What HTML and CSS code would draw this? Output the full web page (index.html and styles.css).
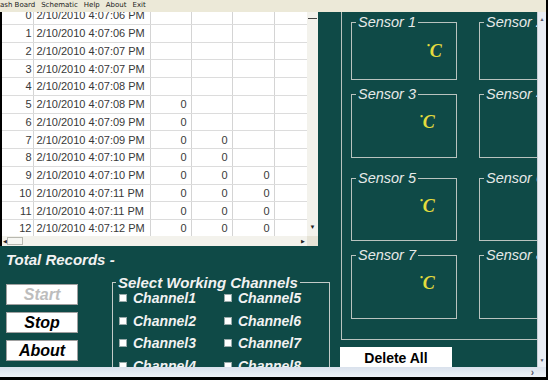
FILE: index.html
```html
<!DOCTYPE html>
<html lang="en">
  <head>
    <meta charset="UTF-8" />
    <meta name="viewport" content="width=device-width, initial-scale=1.0" />
    <title>Temperature Logger</title>
    <link rel="stylesheet" href="styles.css">
  </head>
  <body>
    <div class="window">
      <!-- Menu -->
      <div class="menubar">
        <span>ash Board</span>
        <span>Schematic</span>
        <span>Help</span>
        <span>About</span>
        <span>Exit</span>
      </div>

      <div class="main">
        <div class="left">
          <!-- Siatka z rekordami -->
          <div class="grid">
            <div class="grid-view">
              <div class="table-wrap">
                <table class="records">
                  <colgroup>
                    <col style="width: 31px" />
                    <col style="width: 117px" />
                    <col style="width: 41px" />
                    <col style="width: 41px" />
                    <col style="width: 42px" />
                    <col style="width: 33px" />
                  </colgroup>
                  <tbody>
                    <tr><td>0</td><td class="date">2/10/2010 4:07:06 PM</td><td></td><td></td><td></td><td></td></tr>
                    <tr><td>1</td><td class="date">2/10/2010 4:07:06 PM</td><td></td><td></td><td></td><td></td></tr>
                    <tr><td>2</td><td class="date">2/10/2010 4:07:07 PM</td><td></td><td></td><td></td><td></td></tr>
                    <tr><td>3</td><td class="date">2/10/2010 4:07:07 PM</td><td></td><td></td><td></td><td></td></tr>
                    <tr><td>4</td><td class="date">2/10/2010 4:07:08 PM</td><td></td><td></td><td></td><td></td></tr>
                    <tr><td>5</td><td class="date">2/10/2010 4:07:08 PM</td><td>0</td><td></td><td></td><td></td></tr>
                    <tr><td>6</td><td class="date">2/10/2010 4:07:09 PM</td><td>0</td><td></td><td></td><td></td></tr>
                    <tr><td>7</td><td class="date">2/10/2010 4:07:09 PM</td><td>0</td><td>0</td><td></td><td></td></tr>
                    <tr><td>8</td><td class="date">2/10/2010 4:07:10 PM</td><td>0</td><td>0</td><td></td><td></td></tr>
                    <tr><td>9</td><td class="date">2/10/2010 4:07:10 PM</td><td>0</td><td>0</td><td>0</td><td></td></tr>
                    <tr><td>10</td><td class="date">2/10/2010 4:07:11 PM</td><td>0</td><td>0</td><td>0</td><td></td></tr>
                    <tr><td>11</td><td class="date">2/10/2010 4:07:11 PM</td><td>0</td><td>0</td><td>0</td><td></td></tr>
                    <tr><td>12</td><td class="date">2/10/2010 4:07:12 PM</td><td>0</td><td>0</td><td>0</td><td></td></tr>
                  </tbody>
                </table>
              </div>
              <div class="vscroll">
                <span class="cap"></span>
                <span class="arrow">▼</span>
              </div>
            </div>
            <div class="hscroll">
              <span class="arrow">◀</span>
              <span class="thumb"></span>
              <span class="track"></span>
              <span class="arrow">▶</span>
              <span class="corner"></span>
            </div>
          </div>

          <!-- Sterowanie -->
          <div class="controls">
            <div class="total">Total Records -</div>
            <div class="control-row">
              <div class="buttons">
                <button class="btn" disabled>Start</button>
                <button class="btn">Stop</button>
                <button class="btn">About</button>
              </div>
              <fieldset class="channels">
                <legend>Select Working Channels</legend>
                <div class="channel-list">
                  <label><span class="box"></span>Channel1</label>
                  <label><span class="box"></span>Channel2</label>
                  <label><span class="box"></span>Channel3</label>
                  <label><span class="box"></span>Channel4</label>
                  <label><span class="box"></span>Channel5</label>
                  <label><span class="box"></span>Channel6</label>
                  <label><span class="box"></span>Channel7</label>
                  <label><span class="box"></span>Channel8</label>
                </div>
              </fieldset>
            </div>
          </div>
        </div>

        <!-- Czujniki -->
        <div class="right">
          <div class="sensor-group">
            <div class="sensor-row">
              <fieldset class="sensor"><legend>Sensor 1</legend><span class="unit first"><span class="deg">•</span>C</span></fieldset>
              <fieldset class="sensor"><legend>Sensor 2</legend></fieldset>
            </div>
            <div class="sensor-row">
              <fieldset class="sensor"><legend>Sensor 3</legend><span class="unit"><span class="deg">•</span>C</span></fieldset>
              <fieldset class="sensor"><legend>Sensor 4</legend></fieldset>
            </div>
            <div class="sensor-row">
              <fieldset class="sensor"><legend>Sensor 5</legend><span class="unit"><span class="deg">•</span>C</span></fieldset>
              <fieldset class="sensor"><legend>Sensor 6</legend></fieldset>
            </div>
            <div class="sensor-row">
              <fieldset class="sensor"><legend>Sensor 7</legend><span class="unit"><span class="deg">•</span>C</span></fieldset>
              <fieldset class="sensor"><legend>Sensor 8</legend></fieldset>
            </div>
          </div>
          <button class="delete">Delete All</button>
        </div>

        <div class="win-vscroll">
          <span class="arrow">▲</span>
          <span class="arrow">▼</span>
        </div>
      </div>

      <div class="win-hscroll">
        <span class="arrow">›</span>
      </div>
    </div>
  </body>
</html>
```

FILE: styles.css
```css
body {
  margin: 0;
  background: #000;
  font-family: "Liberation Sans", Arial, sans-serif;
}

.window {
  width: 546px;
  height: 377px;
  display: flex;
  flex-direction: column;
  background: #0f4a47;
  overflow: hidden;
}

.menubar {
  height: 12px;
  flex-shrink: 0;
  display: flex;
  gap: 6px;
  background: #ece9d8;
  font-family: "DejaVu Sans", sans-serif;
  font-size: 7px;
  line-height: 11px;
  color: #1a1a1a;
}

.main {
  height: 355px;
  display: flex;
}

.left {
  width: 318px;
  flex-shrink: 0;
  display: flex;
  flex-direction: column;
}

/* siatka */
.grid {
  height: 234px;
  border-left: 2px solid #000;
  display: flex;
  flex-direction: column;
}

.grid-view {
  height: 224px;
  display: flex;
}

.table-wrap {
  width: 305px;
  background: #fff;
  overflow: hidden;
}

.records {
  width: 305px;
  table-layout: fixed;
  border-collapse: collapse;
  margin-top: -5px;
  font-size: 11px;
  color: #383838;
}

.records td {
  height: 16.75px;
  padding: 0 4px 0 0;
  text-align: right;
  white-space: nowrap;
  overflow: hidden;
  border-right: 1px solid #d4d4d4;
  border-bottom: 1px solid #dcdcdc;
}

.records td:first-child {
  padding-right: 1px;
}

.records td.date {
  text-align: left;
  padding-left: 3px;
}

.vscroll {
  width: 11px;
  display: flex;
  flex-direction: column;
  justify-content: space-between;
  align-items: center;
  background: #f3f2ec;
  font-size: 6px;
  color: #222;
}

.vscroll .cap {
  width: 9px;
  margin-top: 6px;
  border-bottom: 1px solid #444;
}

.vscroll .arrow {
  margin-bottom: 6px;
}

.hscroll {
  height: 10px;
  display: flex;
  align-items: center;
  background: #f3f2ec;
  font-size: 5px;
  color: #222;
}

.hscroll .arrow {
  width: 5px;
  text-align: center;
}

.hscroll .thumb {
  width: 16px;
  height: 8px;
  border: 1px solid #b8b8b0;
  box-sizing: border-box;
  background: #f6f6f2;
}

.hscroll .track {
  flex: 1;
}

.hscroll .corner {
  width: 11px;
  height: 10px;
  margin-left: 2px;
  background: #e6e3d6;
}

/* sterowanie */
.controls {
  flex: 1;
  padding: 5px 0 0 6px;
  color: #f2f2f2;
}

.total {
  font-size: 15px;
  font-weight: bold;
  font-style: italic;
  line-height: 18px;
}

.control-row {
  display: flex;
  margin-top: 6px;
}

.buttons {
  width: 72px;
  flex-shrink: 0;
  margin-top: 9px;
  display: flex;
  flex-direction: column;
  gap: 7px;
}

.btn {
  height: 21px;
  padding: 0;
  background: #fff;
  border: 1px solid #a0a0a0;
  font-family: "Liberation Sans", Arial, sans-serif;
  font-size: 16px;
  font-weight: bold;
  font-style: italic;
  color: #000;
}

.btn:disabled {
  color: #bdbdbd;
}

.channels {
  width: 211px;
  flex-shrink: 0;
  margin: 0 0 0 34px;
  padding: 0 0 0 6px;
  box-sizing: border-box;
  border: 1px solid #c3cbc8;
  border-bottom: none;
}

.channels legend {
  margin-left: -3px;
  padding: 0 2px;
  font-size: 15px;
  font-weight: bold;
  font-style: italic;
  line-height: 15px;
}

.channel-list {
  margin-top: -3px;
  display: grid;
  grid-template-columns: 105px 105px;
  grid-template-rows: repeat(4, 22.5px);
  grid-auto-flow: column;
}

.channel-list label {
  display: flex;
  align-items: center;
  gap: 6px;
  font-size: 14px;
  font-weight: bold;
  font-style: italic;
}

.box {
  width: 8px;
  height: 8px;
  background: #fff;
  border: 1px solid #9aa;
  box-sizing: border-box;
}

/* czujniki */
.right {
  flex: 1;
  overflow: hidden;
  padding-left: 23px;
}

.sensor-group {
  width: 320px;
  height: 328px;
  box-sizing: border-box;
  padding: 3px 0 0 9px;
  border-left: 1px solid #b9c3bf;
  border-bottom: 1px solid #b9c3bf;
}

.sensor-row {
  display: flex;
  gap: 22px;
}

.sensor-row:nth-child(2) {
  margin-top: 7px;
}

.sensor-row:nth-child(3) {
  margin-top: 13px;
}

.sensor-row:nth-child(4) {
  margin-top: 7px;
}

.sensor {
  width: 106px;
  height: 71px;
  flex-shrink: 0;
  margin: 0;
  padding: 0;
  box-sizing: border-box;
  border: 1px solid #b9c3bf;
}

.sensor-row:first-child .sensor {
  height: 65px;
}

.sensor-row:nth-child(3) .sensor {
  height: 70px;
}

.sensor legend {
  margin-left: 4px;
  padding: 0 2px;
  font-size: 14.5px;
  font-style: italic;
  line-height: 14px;
  color: #e6e9e8;
}

.unit {
  display: block;
  margin: 11px 0 0 68px;
  font-family: "Liberation Serif", serif;
  font-size: 18px;
  font-weight: bold;
  font-style: italic;
  line-height: 20px;
  color: #e3dc3e;
}

.unit.first {
  margin: 12px 0 0 75px;
}

.deg {
  font-size: 8px;
  vertical-align: top;
  line-height: 10px;
}

.delete {
  width: 112px;
  height: 22px;
  margin: 7px 0 0 -1px;
  padding: 0;
  background: #fff;
  border: none;
  font-family: "Liberation Sans", Arial, sans-serif;
  font-size: 14px;
  font-weight: bold;
  color: #000;
}

/* paski przewijania okna */
.win-vscroll {
  width: 8px;
  flex-shrink: 0;
  display: flex;
  flex-direction: column;
  justify-content: space-between;
  align-items: center;
  background: #e9edf4;
  border-left: 1px solid #c8cdd6;
  font-size: 5px;
  color: #556;
}

.win-vscroll .arrow {
  margin: 4px 0;
}

.win-hscroll {
  height: 10px;
  flex-shrink: 0;
  display: flex;
  justify-content: flex-end;
  align-items: center;
  padding-right: 12px;
  background: linear-gradient(#d9e1ec, #eef2f8);
  font-size: 10px;
  font-weight: bold;
  color: #556;
}
```
